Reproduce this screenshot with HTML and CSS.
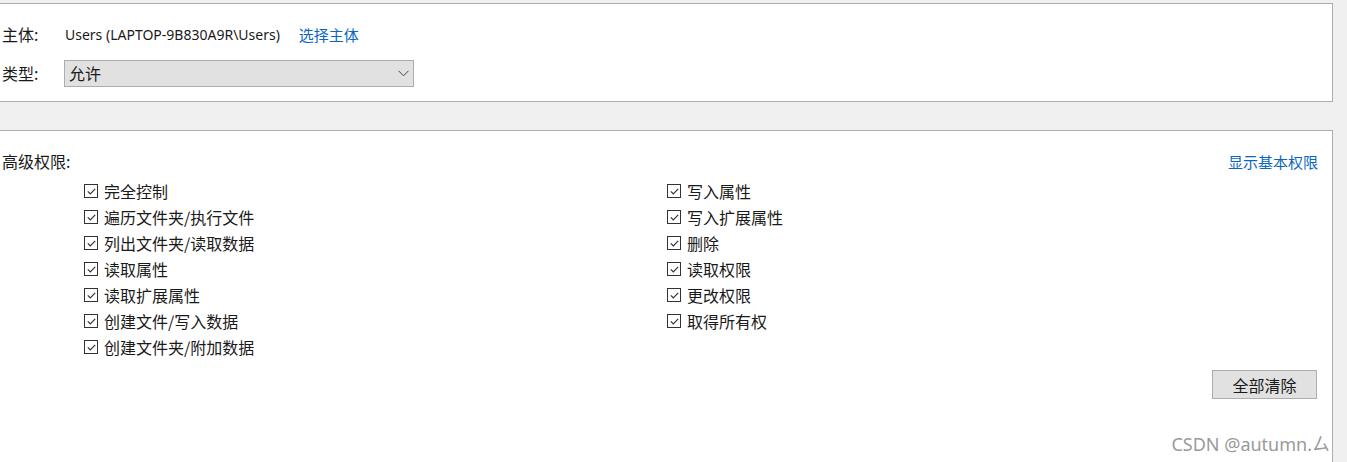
FILE: index.html
```html
<!DOCTYPE html>
<html lang="zh-CN">
<head>
<meta charset="utf-8">
<title>高级安全设置</title>
<link rel="stylesheet" href="styles.css">
</head>
<body>
<section class="panel panel-top">
  <div class="row row-principal">
    <span class="label">主体:</span>
    <span class="value">Users (LAPTOP-9B830A9R\Users)</span>
    <a class="link link-select">选择主体</a>
  </div>
  <div class="row row-type">
    <span class="label">类型:</span>
    <div class="select">
      <span class="select-text">允许</span>
      <svg class="select-arrow" width="11" height="7" viewBox="0 0 11 7"><polyline points="0.5,0.8 5.5,5.8 10.5,0.8" fill="none" stroke="#444" stroke-width="1"/></svg>
    </div>
  </div>
</section>
<section class="panel panel-perms">
  <div class="perm-head">
    <span class="perm-title">高级权限:</span>
    <a class="link">显示基本权限</a>
  </div>
  <div class="perm-grid">
    <label class="perm"><span class="box"><svg width="11" height="11" viewBox="0 0 11 11"><polyline points="1.8,5.3 4.3,7.8 9.2,2.9" fill="none" stroke="#333" stroke-width="1.2"/></svg></span>完全控制</label>
    <label class="perm"><span class="box"><svg width="11" height="11" viewBox="0 0 11 11"><polyline points="1.8,5.3 4.3,7.8 9.2,2.9" fill="none" stroke="#333" stroke-width="1.2"/></svg></span>遍历文件夹/执行文件</label>
    <label class="perm"><span class="box"><svg width="11" height="11" viewBox="0 0 11 11"><polyline points="1.8,5.3 4.3,7.8 9.2,2.9" fill="none" stroke="#333" stroke-width="1.2"/></svg></span>列出文件夹/读取数据</label>
    <label class="perm"><span class="box"><svg width="11" height="11" viewBox="0 0 11 11"><polyline points="1.8,5.3 4.3,7.8 9.2,2.9" fill="none" stroke="#333" stroke-width="1.2"/></svg></span>读取属性</label>
    <label class="perm"><span class="box"><svg width="11" height="11" viewBox="0 0 11 11"><polyline points="1.8,5.3 4.3,7.8 9.2,2.9" fill="none" stroke="#333" stroke-width="1.2"/></svg></span>读取扩展属性</label>
    <label class="perm"><span class="box"><svg width="11" height="11" viewBox="0 0 11 11"><polyline points="1.8,5.3 4.3,7.8 9.2,2.9" fill="none" stroke="#333" stroke-width="1.2"/></svg></span>创建文件/写入数据</label>
    <label class="perm"><span class="box"><svg width="11" height="11" viewBox="0 0 11 11"><polyline points="1.8,5.3 4.3,7.8 9.2,2.9" fill="none" stroke="#333" stroke-width="1.2"/></svg></span>创建文件夹/附加数据</label>
    <label class="perm"><span class="box"><svg width="11" height="11" viewBox="0 0 11 11"><polyline points="1.8,5.3 4.3,7.8 9.2,2.9" fill="none" stroke="#333" stroke-width="1.2"/></svg></span>写入属性</label>
    <label class="perm"><span class="box"><svg width="11" height="11" viewBox="0 0 11 11"><polyline points="1.8,5.3 4.3,7.8 9.2,2.9" fill="none" stroke="#333" stroke-width="1.2"/></svg></span>写入扩展属性</label>
    <label class="perm"><span class="box"><svg width="11" height="11" viewBox="0 0 11 11"><polyline points="1.8,5.3 4.3,7.8 9.2,2.9" fill="none" stroke="#333" stroke-width="1.2"/></svg></span>删除</label>
    <label class="perm"><span class="box"><svg width="11" height="11" viewBox="0 0 11 11"><polyline points="1.8,5.3 4.3,7.8 9.2,2.9" fill="none" stroke="#333" stroke-width="1.2"/></svg></span>读取权限</label>
    <label class="perm"><span class="box"><svg width="11" height="11" viewBox="0 0 11 11"><polyline points="1.8,5.3 4.3,7.8 9.2,2.9" fill="none" stroke="#333" stroke-width="1.2"/></svg></span>更改权限</label>
    <label class="perm"><span class="box"><svg width="11" height="11" viewBox="0 0 11 11"><polyline points="1.8,5.3 4.3,7.8 9.2,2.9" fill="none" stroke="#333" stroke-width="1.2"/></svg></span>取得所有权</label>
  </div>
  <div class="actions">
    <button class="btn">全部清除</button>
  </div>
  <div class="watermark">CSDN @autumn.ㄙ</div>
</section>
</body>
</html>
```
FILE: styles.css
```css
html, body {
  margin: 0;
  padding: 0;
}
body {
  background: #f0f0f0;
  font-family: "Noto Sans CJK SC", sans-serif;
  font-size: 16px;
  color: #1a1a1a;
  height: 462px;
  overflow: hidden;
}
.panel {
  background: #fff;
  border: 1px solid #adadad;
  margin-left: -1px;
  width: 1334px;
  box-sizing: border-box;
}
.panel-top {
  margin-top: 3px;
  height: 99px;
  padding: 18px 0 0 2px;
}
.row {
  display: flex;
  align-items: center;
}
.row-principal {
  height: 24px;
}
.row-type {
  height: 26px;
  margin-top: 14px;
}
.label {
  width: 62px;
  flex: none;
}
.value {
  font-family: "Noto Sans", "Noto Sans CJK SC", sans-serif;
  font-size: 14px;
  margin-left: 1px;
  margin-right: 19px;
}
.link {
  color: #0b66c2;
  cursor: pointer;
  font-size: 15px;
}
.select {
  width: 350px;
  height: 27px;
  box-sizing: border-box;
  background: #e1e1e1;
  border: 1px solid #adadad;
  display: flex;
  align-items: center;
  justify-content: space-between;
  padding: 0 4px 0 4px;
}
.select-arrow {
  display: block;
}
.panel-perms {
  margin-top: 28px;
  height: 340px;
  border-bottom: none;
  position: relative;
  padding: 18px 14px 0 2px;
}
.perm-head {
  display: flex;
  justify-content: space-between;
  align-items: center;
  height: 24px;
}
.perm-grid {
  display: grid;
  grid-auto-flow: column;
  grid-template-rows: repeat(7, 26px);
  grid-template-columns: 583px 1fr;
  margin-top: 5px;
  padding-left: 82px;
}
.perm {
  display: flex;
  align-items: center;
  gap: 6px;
}
.box {
  width: 14px;
  height: 14px;
  box-sizing: border-box;
  border: 1px solid #333;
  display: flex;
  align-items: center;
  justify-content: center;
  background: #fff;
}
.box svg {
  display: block;
}
.actions {
  display: flex;
  justify-content: flex-end;
  margin-top: 10px;
  padding-right: 1px;
}
.btn {
  width: 105px;
  height: 29px;
  background: #e1e1e1;
  border: 1px solid #adadad;
  font-family: "Noto Sans CJK SC", sans-serif;
  font-size: 16px;
  color: #1a1a1a;
  padding: 0;
}
.watermark {
  position: absolute;
  right: 2px;
  top: 299px;
  font-family: "Noto Sans", "Noto Sans CJK SC", sans-serif;
  font-size: 18px;
  color: #9a9a9a;
}
```
